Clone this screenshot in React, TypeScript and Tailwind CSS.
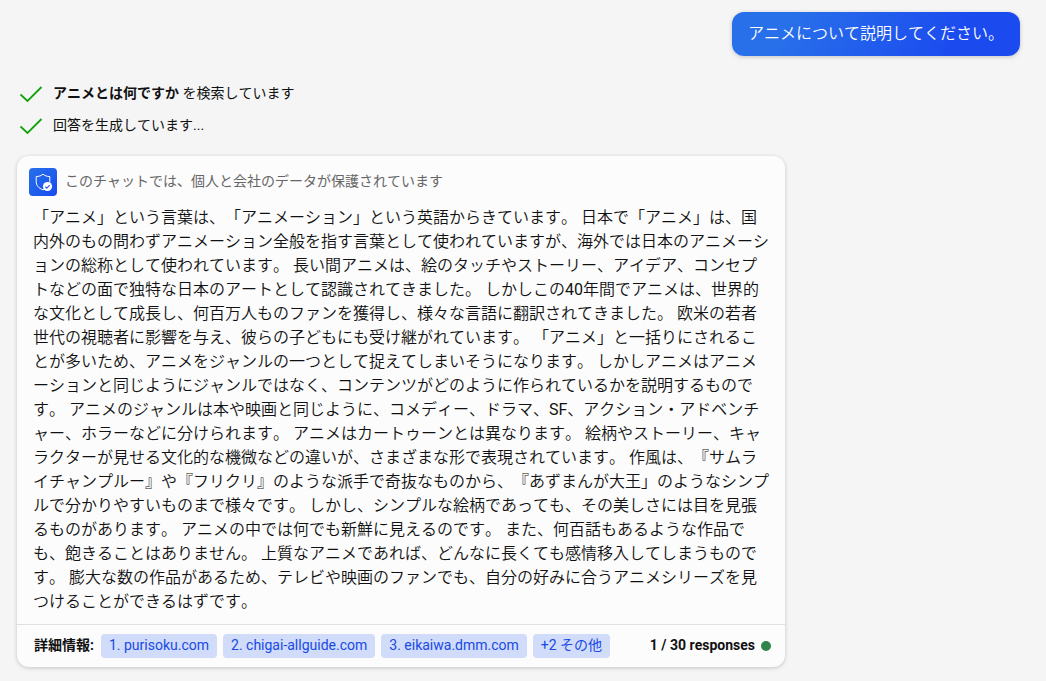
const answer = [
  "「アニメ」という言葉は、「アニメーション」という英語からきています。",
  "日本で「アニメ」は、国内外のもの問わずアニメーション全般を指す言葉として使われていますが、海外では日本のアニメーションの総称として使われています。",
  "長い間アニメは、絵のタッチやストーリー、アイデア、コンセプトなどの面で独特な日本のアートとして認識されてきました。",
  "しかしこの40年間でアニメは、世界的な文化として成長し、何百万人ものファンを獲得し、様々な言語に翻訳されてきました。",
  "欧米の若者世代の視聴者に影響を与え、彼らの子どもにも受け継がれています。",
  "「アニメ」と一括りにされることが多いため、アニメをジャンルの一つとして捉えてしまいそうになります。",
  "しかしアニメはアニメーションと同じようにジャンルではなく、コンテンツがどのように作られているかを説明するものです。",
  "アニメのジャンルは本や映画と同じように、コメディー、ドラマ、SF、アクション・アドベンチャー、ホラーなどに分けられます。",
  "アニメはカートゥーンとは異なります。",
  "絵柄やストーリー、キャラクターが見せる文化的な機微などの違いが、さまざまな形で表現されています。",
  "作風は、『サムライチャンプルー』や『フリクリ』のような派手で奇抜なものから、『あずまんが大王」のようなシンプルで分かりやすいものまで様々です。",
  "しかし、シンプルな絵柄であっても、その美しさには目を見張るものがあります。",
  "アニメの中では何でも新鮮に見えるのです。",
  "また、何百話もあるような作品でも、飽きることはありません。",
  "上質なアニメであれば、どんなに長くても感情移入してしまうものです。",
  "膨大な数の作品があるため、テレビや映画のファンでも、自分の好みに合うアニメシリーズを見つけることができるはずです。",
];

const sources = ["1. purisoku.com", "2. chigai-allguide.com", "3. eikaiwa.dmm.com"];

const chip = "rounded bg-[#d1dbfa] px-2 pb-[2px] text-sm leading-[22px] text-[#174ae4]";

function CheckMark() {
  return (
    <svg className="h-6 w-6 shrink-0" viewBox="0 0 24 24" fill="none" stroke="#13a10e" strokeWidth="1.8" aria-hidden="true">
      <path d="M1.5 12.5 8.5 19 22.5 5" />
    </svg>
  );
}

function ShieldBadge() {
  return (
    <span className="flex h-7 w-7 shrink-0 items-center justify-center rounded bg-linear-to-br from-[#2870ea] to-[#1b4aef]">
      <svg className="h-5 w-5" viewBox="0 0 20 20" fill="none" aria-hidden="true">
        <path
          d="M10 2.2C8.2 3.7 6 4.5 3.2 4.6V9.5c0 3.9 2.3 6.6 6.8 8.3 4.5-1.7 6.8-4.4 6.8-8.3V4.6C14 4.5 11.8 3.7 10 2.2Z"
          stroke="white"
          strokeWidth="1"
          strokeLinejoin="round"
        />
        <circle cx="14.5" cy="14.5" r="4.6" fill="white" />
        <path d="m12.3 14.6 1.5 1.5 2.9-2.9" stroke="#1f56ec" strokeWidth="1.1" />
      </svg>
    </span>
  );
}

export default function App() {
  return (
    <main
      lang="ja"
      className="min-h-screen bg-[#f5f5f5] pt-3 pr-[26px] pb-3 pl-[17px] font-[Roboto,'Noto_Sans_CJK_JP',sans-serif] text-[#111111] [font-kerning:none] [text-spacing-trim:space-all]"
    >
      <div className="flex justify-end">
        <p className="rounded-xl bg-linear-[120deg] from-[#2870ea] from-20% to-[#1b4aef] to-78% px-4 py-[10px] text-base font-[350] text-white shadow-[0_1px_4px_rgba(0,0,0,0.2)]">
          アニメについて説明してください。
        </p>
      </div>

      <ul className="mt-[22px] pl-[2px] text-sm">
        <li className="flex h-8 items-center gap-[10px]">
          <CheckMark />
          <span className="pb-[2px]">
            <strong>アニメとは何ですか</strong> を検索しています
          </span>
        </li>
        <li className="flex h-8 items-center gap-[10px]">
          <CheckMark />
          <span className="pb-[2px]">回答を生成しています...</span>
        </li>
      </ul>

      <article className="mt-[14px] max-w-3xl rounded-xl bg-[#fcfcfc] shadow-[0_1px_4px_rgba(0,0,0,0.2)]">
        <header className="flex items-center gap-2 px-3 pt-3 text-sm text-[#666666]">
          <ShieldBadge />
          <span className="pb-[2px]">このチャットでは、個人と会社のデータが保護されています</span>
        </header>

        <p className="px-4 pt-[10px] pb-[10px] font-[Roboto,'Noto_Sans_CJK_JP_DemiLight','Noto_Sans_CJK_JP',sans-serif] text-base [line-break:loose]">
          {answer.join(" ")}
        </p>

        <footer className="flex flex-wrap items-center gap-[6px] border-t border-[#e0e0e0] py-[9px] pr-[14px] pl-[17px] text-sm">
          <strong className="mr-px pb-[2px]">詳細情報:</strong>
          {sources.map((source) => (
            <a key={source} href="#" className={chip}>
              {source}
            </a>
          ))}
          <button type="button" className={chip}>
            +2 その他
          </button>
          <span className="ml-auto flex items-center gap-[6px] font-bold">
            <span className="pb-[2px]">1 / 30 responses</span>
            <span className="h-[10px] w-[10px] rounded-full bg-[#2e8449]" />
          </span>
        </footer>
      </article>
    </main>
  );
}
